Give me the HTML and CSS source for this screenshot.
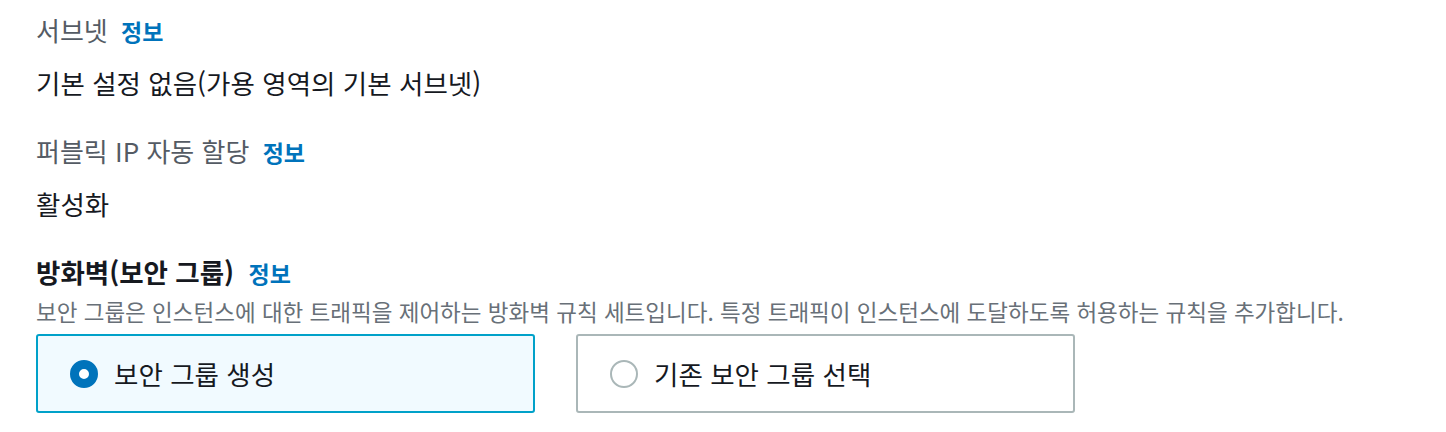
FILE: index.html
```html
<!DOCTYPE html>
<html lang="ko">
<head>
<meta charset="utf-8">
<link rel="stylesheet" href="styles.css">
</head>
<body>
<div class="page">
  <div class="field">
    <div class="label">서브넷 <a class="info">정보</a></div>
    <div class="value">기본 설정 없음(가용 영역의 기본 서브넷)</div>
  </div>
  <div class="field">
    <div class="label">퍼블릭 IP 자동 할당 <a class="info">정보</a></div>
    <div class="value">활성화</div>
  </div>
  <div class="section">
    <div class="heading">방화벽(보안 그룹) <a class="info">정보</a></div>
    <div class="desc">보안 그룹은 인스턴스에 대한 트래픽을 제어하는 방화벽 규칙 세트입니다. 특정 트래픽이 인스턴스에 도달하도록 허용하는 규칙을 추가합니다.</div>
    <div class="tiles">
      <div class="tile selected"><span class="radio"></span><span class="tile-text">보안 그룹 생성</span></div>
      <div class="tile"><span class="radio"></span><span class="tile-text">기존 보안 그룹 선택</span></div>
    </div>
  </div>
</div>
</body>
</html>
```

FILE: styles.css
```css
html, body { margin: 0; padding: 0; background: #fff; }
body {
  font-family: "Noto Sans CJK KR", "Noto Sans", sans-serif;
  -webkit-font-smoothing: antialiased;
}
.page { padding: 15px 36px 0; }
.field { margin-bottom: 38px; }
.label {
  font-size: 26px;
  line-height: 30px;
  color: #545b64;
}
.info {
  font-size: 23px;
  font-weight: 700;
  color: #0073bb;
  margin-left: 6px;
}
.value {
  margin-top: 22px;
  font-size: 26.5px;
  line-height: 30px;
  color: #16191f;
}
.heading {
  font-size: 26.5px;
  line-height: 30px;
  font-weight: 700;
  color: #16191f;
}
.heading .info { margin-left: 7px; }
.desc {
  margin-top: 10px;
  font-size: 22.5px;
  line-height: 26px;
  color: #687078;
}
.tiles {
  margin-top: 10px;
  display: flex;
  gap: 41px;
}
.tile {
  box-sizing: border-box;
  width: 499px;
  height: 79px;
  border: 2px solid #aab7b8;
  border-radius: 3px;
  display: flex;
  align-items: center;
  padding-left: 32px;
  background: #fff;
}
.tile.selected {
  border-color: #00a1c9;
  background: #f1faff;
}
.radio {
  box-sizing: border-box;
  width: 28px;
  height: 28px;
  border-radius: 50%;
  border: 2px solid #aab7b8;
  background: #fff;
  flex: none;
}
.tile.selected .radio {
  border: 9px solid #0073bb;
}
.tile-text {
  margin-left: 16px;
  font-size: 26.5px;
  color: #16191f;
}
```
